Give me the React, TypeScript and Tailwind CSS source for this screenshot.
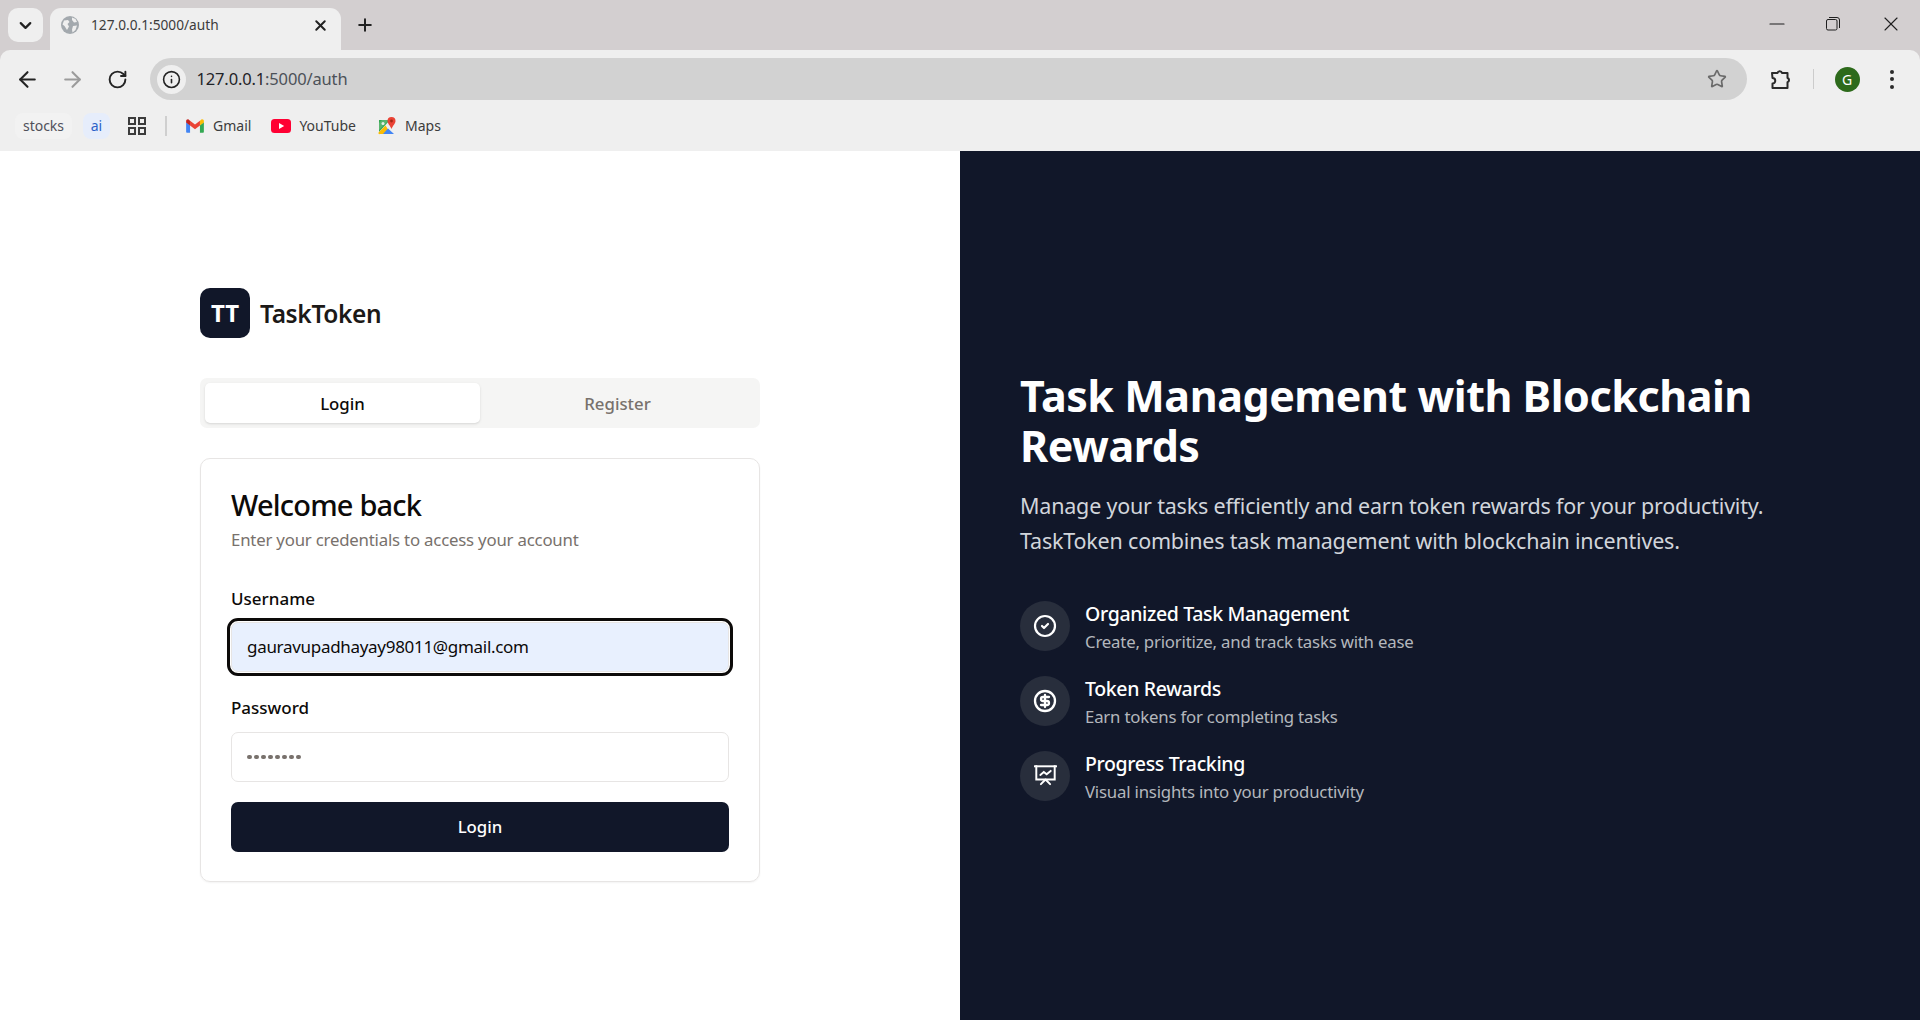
import React from "react";
import { ArrowLeft, ArrowRight, RotateCw, Info, Star, X, Plus, ChevronDown, Minus, CircleCheck, CircleDollarSign } from "lucide-react";

function Globe() {
  return (
    <svg width="18" height="18" viewBox="0 0 18 18">
      <circle cx="9" cy="9" r="9" fill="#a3a9ae" />
      <path d="M3 4.500 7 4l1.500 2-2 2 1.500 2.500L6 14 3.500 10 1.500 8.500zM11 1.500l3.500 1.500 1.500 3-3 .5-2-2.500zM12 10l4-.5-1.500 4.500-3 2.500-.5-3z" fill="#efefef" />
    </svg>
  );
}

function Gmail() {
  return (
    <svg width="18" height="14" viewBox="0 0 19 15">
      <path d="M0 3.200V13.600c0 .7.500 1.200 1.200 1.200H4.200V6.800z" fill="#4285f4" />
      <path d="M14.800 6.800v8h3c.7 0 1.200-.5 1.200-1.200V3.200z" fill="#34a853" />
      <path d="M14.800 2v5l4.200-3.300V2.200C19 .7 17.300-.2 16.100.8z" fill="#fbbc04" />
      <path d="M4.200 7V2L9.500 6 14.800 2v5L9.500 11z" fill="#ea4335" />
      <path d="M0 2.200v1.500L4.200 7V2L2.900.8C1.700-.2 0 .7 0 2.200z" fill="#c5221f" />
    </svg>
  );
}

function YouTube() {
  return (
    <svg width="20" height="14" viewBox="0 0 20 14">
      <rect width="20" height="14" rx="3.500" fill="#ff0033" />
      <path d="M8 4l5.200 3L8 10z" fill="#fff" />
    </svg>
  );
}

function Maps() {
  return (
    <svg width="18" height="18" viewBox="0 0 18 18">
      <path d="M1 3h11L1 15z" fill="#34a853" />
      <path d="M1 15 7.500 8.500 13 17H2a1 1 0 0 1-1-2z" fill="#fbbc04" />
      <path d="M5 17l5-5.500 6 5.500z" fill="#4285f4" />
      <path d="M4 3h7L1 13V6z" fill="#5ab56f" />
      <circle cx="5" cy="6.500" r="1.500" fill="#e8f0e8" />
      <path d="M13.500 0a4 4 0 0 1 4 4c0 2.500-2.700 4.500-4 8-1.300-3.500-4-5.500-4-8a4 4 0 0 1 4-4z" fill="#ea4335" />
      <circle cx="13.500" cy="4" r="1.400" fill="#a52714" />
    </svg>
  );
}

function Apps() {
  return (
    <svg width="18" height="18" viewBox="0 0 18 18" fill="none" stroke="#3c3c3c" strokeWidth="2">
      <rect x="1" y="1" width="6" height="6" />
      <rect x="11" y="1" width="6" height="6" />
      <rect x="1" y="11" width="6" height="6" />
      <rect x="11" y="11" width="6" height="6" />
    </svg>
  );
}

function Puzzle() {
  return (
    <svg width="22" height="22" viewBox="0 0 22 22" fill="none" stroke="#2b2b2b" strokeWidth="2" strokeLinejoin="round">
      <path d="M2 5h5.500a2.300 2.300 0 0 1 4.500 0H17.500v5a2.200 2.200 0 0 1 0 4.200V20H2.500v-4.500a2.500 2.500 0 0 0 0-5.500z" />
    </svg>
  );
}

function Restore() {
  return (
    <svg width="14" height="14" viewBox="0 0 14 14" fill="none" stroke="#1f1f1f" strokeWidth="1">
      <rect x="0.500" y="2.500" width="10.500" height="10.500" rx="1.500" />
      <path d="M3 .5h8a2.500 2.500 0 0 1 2.500 2.500v8" />
    </svg>
  );
}

function ChartBoard() {
  return (
    <svg width="23" height="23" viewBox="0 0 20 20" fill="none" stroke="#fff" strokeWidth="1.700" strokeLinecap="square">
      <path d="M0.500 2h19" />
      <path d="M2 2v11.500h16V2" />
      <path d="M5.500 9.500 8.500 7l2.500 2 3.500-3" strokeLinecap="round" />
      <path d="M10 13.500 6 17.500M10 13.500l4 4" strokeLinecap="round" />
    </svg>
  );
}

function Bookmark({ icon, label, gap }: { icon: React.ReactNode; label: string; gap: string }) {
  return (
    <div className={`flex items-center ${gap} text-[14px] text-[#3c3c3c]`}>
      {icon}
      <span>{label}</span>
    </div>
  );
}

function BrowserChrome() {
  return (
    <header className="shrink-0 h-[151px] flex flex-col bg-[#d3cfd0] font-['Noto_Sans',sans-serif]">
      <div className="h-[50px] flex items-start pl-[8px]">
        <div className="mt-[8px] w-[35px] h-[34px] rounded-[10px] bg-[#efefef] flex items-center justify-center">
          <ChevronDown size={19} strokeWidth={2.800} color="#222" />
        </div>
        <div className="ml-[7px] mt-[8px] w-[291px] h-[42px] rounded-t-[11px] bg-[#efefef] flex items-center pl-[11px] pr-[12px] pb-[8px]">
          <Globe />
          <span className="ml-[12px] flex-1 text-[13.700px] text-[#3c3c3c]">127.0.0.1:5000/auth</span>
          <X size={17} strokeWidth={2.800} color="#222" />
        </div>
        <div className="ml-[14px] mt-[15px]">
          <Plus size={20} strokeWidth={2.400} color="#222" />
        </div>
        <div className="ml-auto flex items-center h-[50px] pb-[2px] pr-[17px]">
          <Minus size={24} strokeWidth={1.200} color="#1f1f1f" />
          <div className="ml-[37px]"><Restore /></div>
          <X size={24} strokeWidth={1.100} color="#1f1f1f" className="ml-[39px]" />
        </div>
      </div>
      <div className="flex-1 flex flex-col bg-[#efefef] rounded-t-[10px]">
        <div className="h-[50px] flex items-center pl-[14.500px] pr-[26px] pt-[8px]">
          <ArrowLeft size={25} strokeWidth={2} color="#242424" />
          <ArrowRight size={25} strokeWidth={2} color="#9b9b9b" className="ml-[20.500px]" />
          <RotateCw size={21} strokeWidth={2.200} color="#242424" className="ml-[21.500px]" />
          <div className="ml-[22.500px] flex-1 h-[42px] rounded-full bg-[#d2d2d2] flex items-center pl-[6.500px] pr-[20px]">
            <div className="w-[29px] h-[29px] rounded-full bg-[#efefef] flex items-center justify-center">
              <Info size={19} strokeWidth={2} color="#242424" />
            </div>
            <span className="ml-[11px] flex-1 text-[16.500px] tracking-[-0.15px] text-[#4c5158]">
              <span className="text-[#1f2328]">127.0.0.1</span>:5000/auth
            </span>
            <Star size={20} strokeWidth={2} color="#6a6a6a" />
          </div>
          <div className="ml-[23px]"><Puzzle /></div>
          <div className="ml-[21px] w-[1px] h-[20px] bg-[#cccccc]" />
          <div className="ml-[20.500px] w-[25px] h-[25px] rounded-full bg-[#2d6a1b] text-white text-[14px] flex items-center justify-center">G</div>
          <div className="ml-[30.500px] flex flex-col gap-[3.500px]">
            <span className="w-[4px] h-[4px] rounded-full bg-[#2b2b2b]" />
            <span className="w-[4px] h-[4px] rounded-full bg-[#2b2b2b]" />
            <span className="w-[4px] h-[4px] rounded-full bg-[#2b2b2b]" />
          </div>
        </div>
        <div className="flex-1 flex items-center pl-[15px]">
          <div className="h-[26px] w-[57px] rounded-[8px] bg-[#f2f2f2] flex items-center justify-center text-[14px] text-[#50505a]">stocks</div>
          <div className="ml-[11px] h-[26px] w-[27px] rounded-[8px] bg-[#e6edfb] flex items-center justify-center text-[14px] text-[#2c62c9]">ai</div>
          <div className="ml-[18px]"><Apps /></div>
          <div className="ml-[19px] w-[2px] h-[20px] bg-[#cfcfcf]" />
          <div className="ml-[19px]"><Bookmark icon={<Gmail />} label="Gmail" gap="gap-[9px]" /></div>
          <div className="ml-[20px]"><Bookmark icon={<YouTube />} label="YouTube" gap="gap-[8px]" /></div>
          <div className="ml-[22px]"><Bookmark icon={<Maps />} label="Maps" gap="gap-[9px]" /></div>
        </div>
      </div>
    </header>
  );
}

function Feature({ icon, title, sub }: { icon: React.ReactNode; title: string; sub: string }) {
  return (
    <div className="flex gap-[15px] h-[50px]">
      <div className="w-[50px] h-[50px] rounded-full bg-[#282e3c] flex items-center justify-center shrink-0">{icon}</div>
      <div className="-mt-[2px]">
        <div className="text-[19.500px] leading-[30px] font-medium tracking-[-0.35px] text-white">{title}</div>
        <div className="text-[16.800px] leading-[25px] tracking-[-0.2px] text-[#b4b7bd]">{sub}</div>
      </div>
    </div>
  );
}

export default function App() {
  return (
    <div className="w-[1920px] h-[1020px] flex flex-col overflow-hidden font-['Noto_Sans',sans-serif] bg-white">
      <BrowserChrome />
      <main className="flex-1 grid grid-cols-2 min-h-0">
        <section className="flex items-center justify-center bg-white">
          <div className="w-[560px]">
            <div className="flex items-center gap-[10px] -mt-[1px]">
              <div className="w-[50px] h-[50px] rounded-[10px] bg-[#111729] text-white font-bold text-[24px] flex items-center justify-center">TT</div>
              <div className="mt-[3px] text-[24.500px] font-semibold tracking-[-0.35px] text-[#1c1917]">TaskToken</div>
            </div>
            <div className="mt-[40px] h-[50px] rounded-[7px] bg-[#f5f5f4] p-[5px] grid grid-cols-2 text-[16.800px] font-medium">
              <div className="rounded-[5px] bg-white shadow-sm text-[#0c0a09] flex items-center justify-center pt-[2px]">Login</div>
              <div className="text-[#78716c] flex items-center justify-center pt-[2px]">Register</div>
            </div>
            <div className="mt-[30px] h-[424px] rounded-[10px] border border-[#e7e5e4] shadow-xs p-[30px]">
              <h2 className="mt-[1px] text-[29px] leading-[30px] font-medium tracking-[-0.8px] text-[#0c0a09]">Welcome back</h2>
              <p className="mt-[7px] text-[16.800px] leading-[25px] tracking-[-0.2px] text-[#78716c]">Enter your credentials to access your account</p>
              <div className="mt-[38px] text-[17px] leading-[18px] font-medium text-[#0c0a09]">Username</div>
              <div className="mt-[14px] h-[50px] rounded-[7px] bg-[#e8f0fe] border border-[#e7e5e4] px-[15px] flex items-center text-[17px] tracking-[-0.3px] text-[#0c0a09] outline-[3.500px] outline-[#0c0a09] outline-offset-[1.500px] outline-solid">
                gauravupadhayay98011@gmail.com
              </div>
              <div className="mt-[27px] text-[17px] leading-[18px] font-medium text-[#0c0a09]">Password</div>
              <div className="mt-[15px] h-[50px] rounded-[7px] bg-white border border-[#e7e5e4] px-[15px] flex items-center gap-[2.500px]">
                {[0, 1, 2, 3, 4, 5, 6, 7].map((i) => (
                  <span key={i} className="w-[4.500px] h-[4.500px] rounded-full bg-[#78716c]" />
                ))}
              </div>
              <div className="mt-[20px] h-[50px] rounded-[7px] bg-[#111729] text-white text-[16.800px] font-medium flex items-center justify-center">Login</div>
            </div>
          </div>
        </section>
        <section className="bg-[#111729] flex flex-col justify-center px-[60px]">
          <h1 className="text-[43px] leading-[50px] font-bold tracking-[-0.46px] text-white">Task Management with Blockchain Rewards</h1>
          <p className="mt-[17px] text-[21.500px] leading-[35px] tracking-[-0.2px] text-[#d1d5db]">
            Manage your tasks efficiently and earn token rewards for your productivity. TaskToken combines task management with blockchain incentives.
          </p>
          <div className="mt-[43px] flex flex-col gap-[25px]">
            <Feature icon={<CircleCheck size={24} color="#fff" strokeWidth={2.200} />} title="Organized Task Management" sub="Create, prioritize, and track tasks with ease" />
            <Feature icon={<CircleDollarSign size={24} color="#fff" strokeWidth={2.300} />} title="Token Rewards" sub="Earn tokens for completing tasks" />
            <Feature icon={<ChartBoard />} title="Progress Tracking" sub="Visual insights into your productivity" />
          </div>
        </section>
      </main>
    </div>
  );
}
